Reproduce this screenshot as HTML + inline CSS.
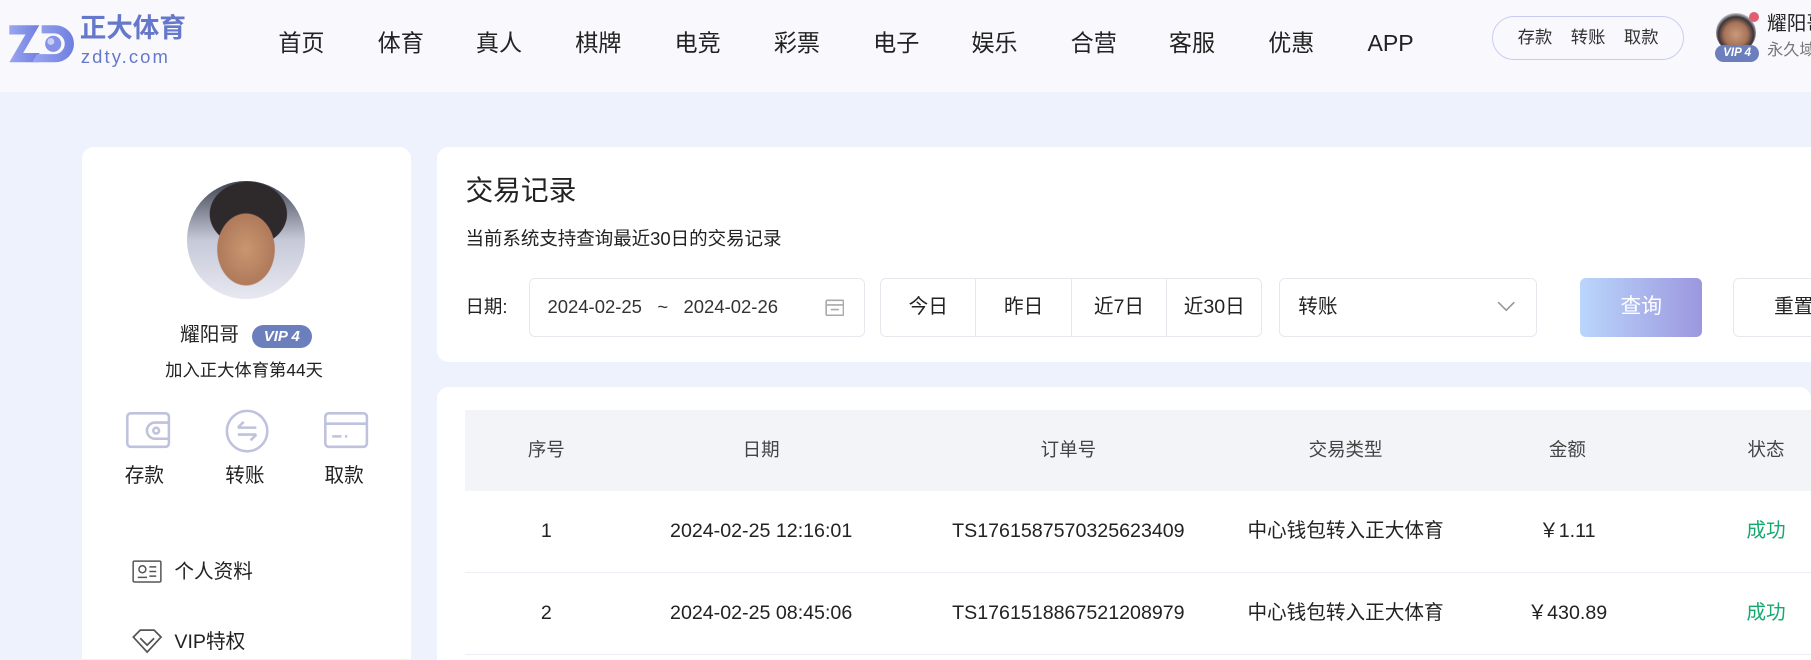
<!DOCTYPE html>
<html><head><meta charset="utf-8"><style>
html{zoom:1.155;height:571px;overflow:hidden}
*{box-sizing:border-box;margin:0;padding:0}
body{width:1568px;height:571px;overflow:hidden;background:#edf2fc;font-family:"Liberation Sans","Noto Sans CJK SC",sans-serif;color:#222;position:relative;line-height:1.25}
.abs{position:absolute;white-space:nowrap}
.hdr{left:0;top:0;width:1568px;height:80px;background:#f9f9fd}
.nav span{position:absolute;top:0;height:76px;line-height:76px;font-size:20px;color:#222}
.pill{left:1292px;top:14px;width:166px;height:38px;border:1px solid #c9ccf2;border-radius:19px;font-size:15px;color:#333;display:flex;justify-content:center;align-items:center;gap:16px}
.card{background:#fff;border-radius:10px 10px 0 0}
.ico{stroke:#bec2dc;fill:none;stroke-width:2.2}
.box{border:1px solid #e6e8ee;border-radius:5px;background:#fff}
.th,.td{position:absolute;font-size:17px;transform:translateX(-50%);white-space:nowrap;height:70px;line-height:70px}
</style></head><body>
<div class="abs hdr"></div>
<svg class="abs" style="left:6px;top:20px" width="58" height="36" viewBox="0 0 58 36">
<defs><linearGradient id="g" x1="0" x2="1"><stop offset="0" stop-color="#9aa6ef"/><stop offset="1" stop-color="#6f7fe0"/></linearGradient></defs>
<path d="M2 2h26l-14 24h14v8H2l14-24H2z" fill="url(#g)"/>
<path d="M30 2h12a16 16 0 0 1 0 32H22l4-7h15a9 9 0 0 0 0-18H30z" fill="url(#g)"/>
<circle cx="40" cy="18" r="7" fill="#8592e6"/><circle cx="38" cy="16" r="3" fill="#c8cff8"/>
</svg>
<div class="abs" style="left:69px;top:10px;font-size:23px;line-height:28px;color:#6678c9;font-weight:bold">正大体育</div>
<div class="abs" style="left:70px;top:39px;font-size:16px;line-height:20px;color:#6678c9;letter-spacing:1.8px">zdty.com</div>
<div class="nav">
<span style="left:241px">首页</span><span style="left:327px">体育</span><span style="left:412px">真人</span><span style="left:498px">棋牌</span><span style="left:584px">电竞</span><span style="left:670px">彩票</span><span style="left:756px">电子</span><span style="left:841px">娱乐</span><span style="left:927px">合营</span><span style="left:1012px">客服</span><span style="left:1098px">优惠</span><span style="left:1184px">APP</span>
</div>
<div class="abs pill"><span>存款</span><span>转账</span><span>取款</span></div>
<div class="abs" style="left:1486px;top:11px;width:34px;height:34px;border-radius:50%;background:radial-gradient(circle at 50% 55%,#c99a7c 0,#a77358 40%,#3b3438 60%,#dfe3ee 75%)"></div>
<div class="abs" style="left:1514px;top:10px;width:9px;height:9px;border-radius:50%;background:#e06070"></div>
<div class="abs" style="left:1485px;top:39px;width:38px;height:15px;border-radius:8px;background:#6b7fbd;color:#fff;font-size:10px;font-weight:bold;text-align:center;line-height:15px;font-style:italic">VIP 4</div>
<div class="abs" style="left:1530px;top:10px;font-size:17px;line-height:22px;color:#222">耀阳哥</div>
<div class="abs" style="left:1530px;top:35px;font-size:14px;line-height:18px;color:#777">永久域名</div>

<div class="abs card" style="left:71px;top:127px;width:285px;height:444px"></div>
<div class="abs" style="left:162px;top:157px;width:102px;height:102px;border-radius:50%;background:radial-gradient(ellipse 40% 50% at 50% 58%,#c8966f 0,#b07a5b 60%,rgba(0,0,0,0) 62%),radial-gradient(ellipse 36% 30% at 52% 28%,#2e2a2c 0,#2e2a2c 90%,rgba(0,0,0,0) 92%),linear-gradient(#3f4352,#c6c9d8 50%,#e7e8f1)"></div>
<div class="abs" style="left:156px;top:280px;font-size:17px;line-height:22px">耀阳哥</div>
<div class="abs" style="left:218px;top:281px;width:52px;height:20px;border-radius:10px;background:#6b7fbd;color:#fff;font-size:13px;font-weight:bold;font-style:italic;text-align:center;line-height:20px">VIP 4</div>
<div class="abs" style="left:143px;top:311px;font-size:15px;line-height:20px">加入正大体育第44天</div>
<svg class="abs ico" style="left:108px;top:356px" width="40" height="34"><rect x="2" y="2" width="36" height="29" rx="3"/><circle cx="27" cy="17" r="2.5"/><path d="M38 10h-12a6 6 0 0 0 0 14h12"/></svg>
<svg class="abs ico" style="left:194px;top:353px" width="40" height="40"><circle cx="20" cy="20" r="17.5"/><path d="M12 17h16M17 12l-5 5M12 23h16M23 28l5-5"/></svg>
<svg class="abs ico" style="left:280px;top:356px" width="40" height="34"><rect x="2" y="2" width="36" height="29" rx="3"/><path d="M2 11h36M8 22h8M19 22h2"/></svg>
<div class="abs" style="left:108px;top:401px;font-size:17px;line-height:24px">存款</div>
<div class="abs" style="left:195px;top:401px;font-size:17px;line-height:24px">转账</div>
<div class="abs" style="left:281px;top:401px;font-size:17px;line-height:24px">取款</div>
<svg class="abs" style="left:114px;top:485px" width="26" height="20" fill="none" stroke="#555" stroke-width="1.3"><rect x="1" y="1" width="24" height="18" rx="1"/><circle cx="9" cy="8" r="3"/><path d="M5 15h8M15 6h6M15 10h6M15 14h6"/></svg>
<div class="abs" style="left:151px;top:484px;font-size:17px;line-height:24px">个人资料</div>
<svg class="abs" style="left:113px;top:545px" width="28" height="22" fill="none" stroke="#555" stroke-width="1.5"><path d="M2 7l6-6h12l6 6-12 13z M8 8l6 6 6-6"/></svg>
<div class="abs" style="left:151px;top:545px;font-size:17px;line-height:24px">VIP特权</div>

<div class="abs card" style="left:378px;top:127px;width:1200px;height:186px;border-radius:10px"></div>
<div class="abs" style="left:403px;top:150px;font-size:24px;line-height:32px">交易记录</div>
<div class="abs" style="left:403px;top:195px;font-size:16px;line-height:24px">当前系统支持查询最近30日的交易记录</div>
<div class="abs" style="left:403px;top:241px;font-size:16px;line-height:51px">日期:</div>
<div class="abs box" style="left:458px;top:241px;width:291px;height:51px"></div>
<div class="abs" style="left:474px;top:241px;font-size:16px;line-height:51px;color:#333">2024-02-25&nbsp;&nbsp;&nbsp;~&nbsp;&nbsp;&nbsp;2024-02-26</div>
<svg class="abs" style="left:714px;top:258px" width="17" height="16" fill="none" stroke="#aaa" stroke-width="1.4"><rect x="1" y="2" width="15" height="13" rx="1"/><path d="M1 6h15M5 10h7"/></svg>
<div class="abs box" style="left:762px;top:241px;width:331px;height:51px;display:flex">
<div style="flex:1;text-align:center;line-height:49px;font-size:17px;border-right:1px solid #e6e8ee">今日</div>
<div style="flex:1;text-align:center;line-height:49px;font-size:17px;border-right:1px solid #e6e8ee">昨日</div>
<div style="flex:1;text-align:center;line-height:49px;font-size:17px;border-right:1px solid #e6e8ee">近7日</div>
<div style="flex:1;text-align:center;line-height:49px;font-size:17px">近30日</div></div>
<div class="abs box" style="left:1107px;top:241px;width:224px;height:51px"></div>
<div class="abs" style="left:1124px;top:241px;font-size:17px;line-height:51px">转账</div>
<svg class="abs" style="left:1296px;top:261px" width="16" height="10" fill="none" stroke="#999" stroke-width="1.4"><path d="M1 1l7 7 7-7"/></svg>
<div class="abs" style="left:1368px;top:241px;width:106px;height:51px;border-radius:5px;background:linear-gradient(90deg,#bad6fb,#9c97df);color:#fff;font-size:18px;text-align:center;line-height:51px">查询</div>
<div class="abs box" style="left:1500px;top:241px;width:100px;height:51px"></div>
<div class="abs" style="left:1536px;top:241px;font-size:17px;line-height:51px">重置</div>

<div class="abs card" style="left:378px;top:335px;width:1190px;height:236px"></div>
<div class="abs" style="left:403px;top:355px;width:1165px;height:70px;background:#f3f4f8"></div>
<div class="abs" style="left:403px;top:495px;width:1165px;height:1px;background:#eceef3"></div>
<div class="abs" style="left:403px;top:566px;width:1165px;height:1px;background:#eceef3"></div>
<div class="th" style="left:473px;top:355px;font-size:16px;color:#444">序号</div>
<div class="th" style="left:659px;top:355px;font-size:16px;color:#444">日期</div>
<div class="th" style="left:925px;top:355px;font-size:16px;color:#444">订单号</div>
<div class="th" style="left:1165px;top:355px;font-size:16px;color:#444">交易类型</div>
<div class="th" style="left:1357px;top:355px;font-size:16px;color:#444">金额</div>
<div class="th" style="left:1529px;top:355px;font-size:16px;color:#444">状态</div>
<div class="td" style="left:473px;top:425px">1</div>
<div class="td" style="left:659px;top:425px">2024-02-25 12:16:01</div>
<div class="td" style="left:925px;top:425px">TS1761587570325623409</div>
<div class="td" style="left:1165px;top:425px">中心钱包转入正大体育</div>
<div class="td" style="left:1357px;top:425px">￥1.11</div>
<div class="td" style="left:1529px;top:425px;color:#17a86f">成功</div>
<div class="td" style="left:473px;top:496px">2</div>
<div class="td" style="left:659px;top:496px">2024-02-25 08:45:06</div>
<div class="td" style="left:925px;top:496px">TS1761518867521208979</div>
<div class="td" style="left:1165px;top:496px">中心钱包转入正大体育</div>
<div class="td" style="left:1357px;top:496px">￥430.89</div>
<div class="td" style="left:1529px;top:496px;color:#17a86f">成功</div>
</body></html>
